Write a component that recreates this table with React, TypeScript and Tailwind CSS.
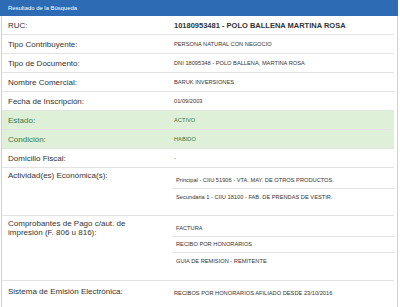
import React from "react";

const font = "font-['Liberation_Sans',Arial,sans-serif]";

function Row({
  label,
  value,
  green,
  bold,
}: {
  label: string;
  value: string;
  green?: boolean;
  bold?: boolean;
}) {
  return (
    <div
      className={`flex h-[19px] items-center border-b border-[#e3e3e3] ${
        green ? "bg-[#dff0d8] text-[#3c763d]" : "text-[#333]"
      }`}
    >
      <div className="w-[172px] shrink-0 pl-[6px] text-[8px] leading-[11px]">{label}</div>
      <div
        className={
          bold
            ? "text-[7.5px] font-bold leading-[11px]"
            : "text-[5.7px] leading-[9px]"
        }
      >
        {value}
      </div>
    </div>
  );
}

function ListRow({
  label,
  items,
  pb,
}: {
  label: React.ReactNode;
  items: string[];
  pb: string;
}) {
  return (
    <div className={`flex border-b border-[#e3e3e3] pt-[5px] text-[#333] ${pb}`}>
      <div className="-mt-[2px] w-[170px] shrink-0 pl-[6px] text-[8px] leading-[9px]">{label}</div>
      <div className="flex-1">
        {items.map((it, i) => (
          <div
            key={i}
            className={`flex h-[16px] items-center pl-[4px] text-[5.7px] ${
              i < items.length - 1 ? "border-b border-[#e3e3e3]" : ""
            }`}
          >
            {it}
          </div>
        ))}
      </div>
    </div>
  );
}

export default function App() {
  return (
    <div className={`h-[307px] w-[400px] overflow-hidden bg-white ${font}`}>
      <div className="w-[398px]">
        <div className="flex h-[16px] items-center bg-[#2d6bb5] pl-[8px] text-[5.9px] text-white">
          Resultado de la Búsqueda
        </div>
        <div className="ml-[1px] w-[397px] border-x border-[#c3d4ea] pr-[3px] pb-[20px]">
          <Row label="RUC:" value="10180953481 - POLO BALLENA MARTINA ROSA" bold />
          <Row label="Tipo Contribuyente:" value="PERSONA NATURAL CON NEGOCIO" />
          <Row label="Tipo de Documento:" value="DNI 18095348 - POLO BALLENA, MARTINA ROSA" />
          <Row label="Nombre Comercial:" value="BARUK INVERSIONES" />
          <Row label="Fecha de Inscripción:" value="01/09/2003" />
          <Row label="Estado:" value="ACTIVO" green />
          <Row label="Condición:" value="HABIDO" green />
          <Row label="Domicilio Fiscal:" value="-" />
          <ListRow
            label="Actividad(es) Económica(s):"
            items={[
              "Principal - CIIU 51906 - VTA. MAY. DE OTROS PRODUCTOS.",
              "Secundaria 1 - CIIU 18100 - FAB. DE PRENDAS DE VESTIR.",
            ]}
            pb="pb-[10px]"
          />
          <ListRow
            label={
              <>
                Comprobantes de Pago c/aut. de
                <br />
                impresión (F. 806 u 816):
              </>
            }
            items={["FACTURA", "RECIBO POR HONORARIOS", "GUIA DE REMISION - REMITENTE"]}
            pb="pb-[11px]"
          />
          <div className="flex pt-[5px] pb-[10px] text-[#333]">
            <div className="w-[172px] shrink-0 pl-[6px] text-[8px] leading-[11px]">
              Sistema de Emisión Electrónica:
            </div>
            <div className="pt-[3px] text-[5.7px] leading-[9px]">
              RECIBOS POR HONORARIOS AFILIADO DESDE 23/10/2016
            </div>
          </div>
        </div>
      </div>
    </div>
  );
}
